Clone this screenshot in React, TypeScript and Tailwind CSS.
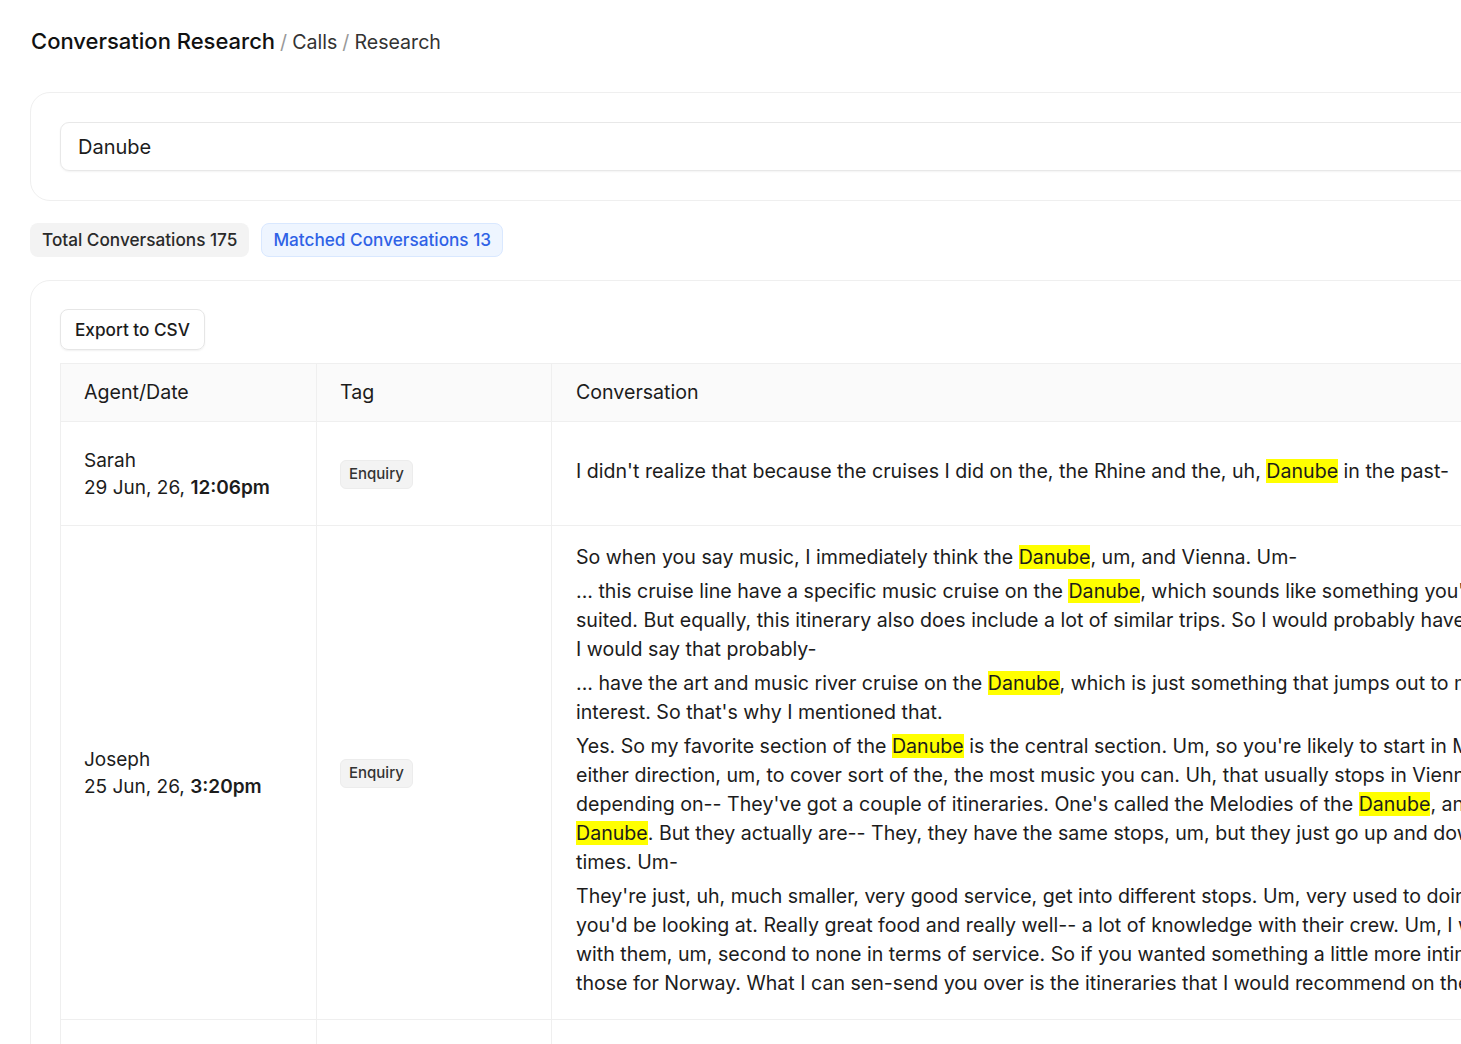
import React from 'react';

type Line = (string | { hit: string })[];

const Hit = ({ children }: { children: React.ReactNode }) => (
  <span className="bg-[#ffff00]">{children}</span>
);

// each paragraph is a list of rendered lines
const renderLine = (line: Line, i: number) => (
  <div key={i} className="whitespace-nowrap">
    {line.map((part, j) =>
      typeof part === 'string' ? <React.Fragment key={j}>{part}</React.Fragment> : <Hit key={j}>{part.hit}</Hit>
    )}
  </div>
);

const rows: { agent: string; day: string; time: string; tag: string; paragraphs: Line[][] }[] = [
  {
    agent: 'Sarah',
    day: '29 Jun, 26,',
    time: '12:06pm',
    tag: 'Enquiry',
    paragraphs: [
      [["I didn't realize that because the cruises I did on the, the Rhine and the, uh, ", { hit: 'Danube' }, ' in the past-']],
    ],
  },
  {
    agent: 'Joseph',
    day: '25 Jun, 26,',
    time: '3:20pm',
    tag: 'Enquiry',
    paragraphs: [
      [['So when you say music, I immediately think the ', { hit: 'Danube' }, ', um, and Vienna. Um-']],
      [
        ['... this cruise line have a specific music cruise on the ', { hit: 'Danube' }, ", which sounds like something you'd be really well"],
        ['suited. But equally, this itinerary also does include a lot of similar trips. So I would probably have both in mind, but'],
        ['I would say that probably-'],
      ],
      [
        ['... have the art and music river cruise on the ', { hit: 'Danube' }, ', which is just something that jumps out to me given your'],
        ["interest. So that's why I mentioned that."],
      ],
      [
        ['Yes. So my favorite section of the ', { hit: 'Danube' }, " is the central section. Um, so you're likely to start in Munich and go"],
        ['either direction, um, to cover sort of the, the most music you can. Uh, that usually stops in Vienna and Budapest,'],
        ["depending on-- They've got a couple of itineraries. One's called the Melodies of the ", { hit: 'Danube' }, ', and the other is the'],
        [{ hit: 'Danube' }, '. But they actually are-- They, they have the same stops, um, but they just go up and down at different'],
        ['times. Um-'],
      ],
      [
        ["They're just, uh, much smaller, very good service, get into different stops. Um, very used to doing the kind of trips"],
        ["you'd be looking at. Really great food and really well-- a lot of knowledge with their crew. Um, I would travel"],
        ['with them, um, second to none in terms of service. So if you wanted something a little more intimate, I would suggest'],
        ['those for Norway. What I can sen-send you over is the itineraries that I would recommend on the river cruises.'],
      ],
    ],
  },
  {
    agent: 'Maria',
    day: '21 Jun, 26,',
    time: '10:41am',
    tag: 'Enquiry',
    paragraphs: [[['Um, we did the ', { hit: 'Danube' }, ' last year and loved it, so something similar would be great.']]],
  },
];

export default function App() {
  return (
    <div className="w-[1461px] h-[1044px] overflow-hidden bg-white text-[#1c1c1c]" style={{ fontFamily: 'Inter, "Noto Sans", sans-serif' }}>
      <div className="w-[1900px] pl-[30px] pt-[25px]">
        {/* breadcrumb */}
        <div className="flex items-baseline gap-[5px] pl-[1px]">
          <span className="text-[22px] font-medium text-[#111]">Conversation Research</span>
          <span className="text-[19.6px] text-[#999]">/</span>
          <span className="text-[19.6px] text-[#333]">Calls</span>
          <span className="text-[19.6px] text-[#999]">/</span>
          <span className="text-[19.6px] text-[#333]">Research</span>
        </div>

        {/* search */}
        <div className="mt-[34px] rounded-[20px] border border-[#efefef] px-[29px] py-[29px]">
          <div className="h-[49px] flex items-center rounded-[9px] border border-[#e8e8e8] shadow-[0_1px_2px_rgba(0,0,0,0.05)] px-[17px] text-[20px] text-[#1c1c1c]">
            Danube
          </div>
        </div>

        {/* counters */}
        <div className="mt-[22px] flex gap-[12px]">
          <span className="h-[34px] flex items-center rounded-[8px] bg-[#f3f3f3] px-[12px] text-[17.2px] font-medium text-[#2a2a2a]">
            Total Conversations 175
          </span>
          <span className="h-[34px] flex items-center rounded-[8px] bg-[#eef5ff] border border-[#d9e8ff] px-[11px] text-[17.2px] font-medium text-[#2f62e6]">
            Matched Conversations 13
          </span>
        </div>

        {/* results */}
        <div className="mt-[23px] rounded-[20px] border border-[#efefef] px-[29px] pt-[28px]">
          <button className="h-[41px] rounded-[8px] border border-[#e6e6e6] shadow-[0_1px_2px_rgba(0,0,0,0.06)] px-[14px] text-[17.2px] font-medium text-[#1c1c1c]">
            Export to CSV
          </button>

          <table className="mt-[13px] w-full border-collapse text-[19.6px]">
            <thead>
              <tr className="bg-[#fafafa] h-[58px]">
                <th className="w-[256px] border border-[#efefef] px-[23px] text-left font-normal">Agent/Date</th>
                <th className="w-[235px] border border-[#efefef] px-[23px] text-left font-normal">Tag</th>
                <th className="border border-[#efefef] px-[24px] text-left font-normal">Conversation</th>
              </tr>
            </thead>
            <tbody>
              {rows.map((r) => (
                <tr key={r.agent} className="h-[104px]">
                  <td className="border border-[#efefef] px-[23px] align-middle text-[19px] leading-[27px]">
                    <div>{r.agent}</div>
                    <div>
                      {r.day} <span className="font-semibold">{r.time}</span>
                    </div>
                  </td>
                  <td className="border border-[#efefef] px-[23px] align-middle">
                    <span className="inline-flex h-[29px] items-center rounded-[6px] border border-[#ececec] bg-[#f3f3f3] px-[8px] text-[15px] font-medium text-[#333]">
                      {r.tag}
                    </span>
                  </td>
                  <td className="border border-[#efefef] px-[24px] pt-[17px] pb-[21px] leading-[29px]">
                    <div className="flex flex-col gap-[5px]">
                      {r.paragraphs.map((p, pi) => (
                        <div key={pi}>{p.map(renderLine)}</div>
                      ))}
                    </div>
                  </td>
                </tr>
              ))}
            </tbody>
          </table>
        </div>
      </div>
    </div>
  );
}
